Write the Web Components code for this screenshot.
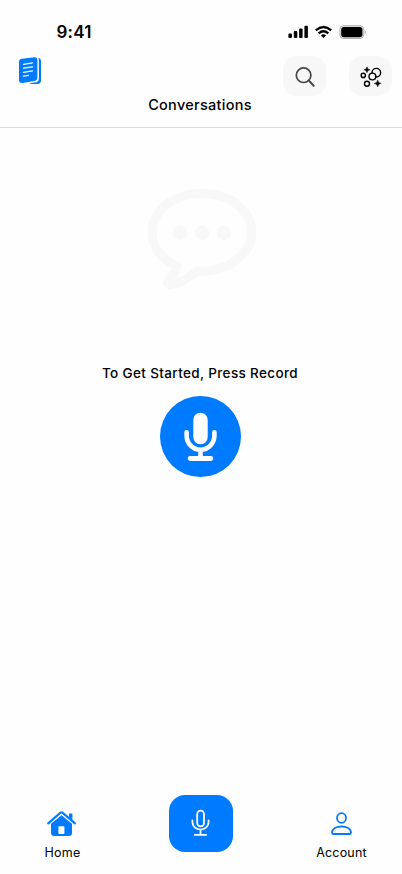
<!DOCTYPE html>
<html lang="en"><head><meta charset="utf-8"><title>Conversations</title>
<style>html,body{margin:0;height:100%;background:#fefefe}body{font-family:Inter,"Liberation Sans",sans-serif;color:#000;overflow:hidden}</style></head>
<body><conversations-screen></conversations-screen>
<script>
const define=(name,css,html)=>customElements.define(name,class extends HTMLElement{
  constructor(){super();this.attachShadow({mode:'open'}).innerHTML=`<style>*{box-sizing:border-box}svg{display:block}${css}</style>${html}`;}
});

define('status-bar',`
:host{display:flex;justify-content:space-between;height:50px;padding:22px 35px 0 56.5px}
.time{font-weight:600;font-size:17px;line-height:21px;letter-spacing:.25px}`,
`<span class="time">9:41</span>
<svg width="79" height="18" viewBox="288 22 79 18">
<rect x="288.4" y="33.4" width="3.5" height="4.6" rx="1"/><rect x="293.8" y="31" width="3.5" height="7" rx="1"/><rect x="299.1" y="28.4" width="3.5" height="9.6" rx="1"/><rect x="304.4" y="25.8" width="3.5" height="12.2" rx="1"/>
<g fill="none" stroke="#000" stroke-width="2.3"><path d="M315.8 30.3Q323.5 23.6 331.2 30.3"/><path d="M318.7 33.4Q323.5 29.2 328.3 33.4"/></g><path d="M320.9 35.4Q323.5 33.3 326.1 35.4L323.5 38Z"/>
<rect x="339.8" y="25.7" width="24" height="12.8" rx="4" fill="#e4e4e4" stroke="#b0b0b0"/><rect x="341.2" y="27" width="21.2" height="10.2" rx="2.7"/><path d="M365.1 30.2Q367.1 32.1 365.1 34Z" fill="#aaa"/></svg>`);

define('tool-button',`:host{display:block;width:43px;height:40px;background:#f7f7f7;border-radius:14px}`,`<slot></slot>`);

define('screen-header',`
:host{display:grid;grid-template-rows:46px 31px;height:78px;border-bottom:1px solid #d9d9d9}
.tools{display:flex;align-items:flex-start;padding:6px 10px 0 19px}
.gap{flex:1}tool-button+tool-button{margin-left:23px}
h1{margin:0;padding-right:2px;text-align:center;font-size:14.5px;font-weight:500;line-height:18px;letter-spacing:.28px}`,
`<div class="tools"><svg width="23" height="28" viewBox="19 56 23 28">
<path d="M38.4 58.1Q41 58.4 41 61.6V80.2Q41 84 37.2 84H32.4Q30.2 84 28.9 83.3L36.4 82.2Q38.9 81.6 38.9 79V61Q38.9 59.3 38.4 58.1Z" fill="#007bff"/>
<path d="M21.9 58.8L34.2 57.2Q37.4 57 37.4 60.1V77.6Q37.4 80.6 34.5 81L22.5 82.9Q19 83.2 19 80V62.2Q19 59.2 21.9 58.8Z" fill="#007bff"/>
<path d="M23.5 64.3L32.5 62.9M23.5 68.2L32.5 66.8M23.5 72.3L32.5 70.9M23.5 76.2L28.5 75.4" stroke="#fefefe" stroke-width="1.3" stroke-linecap="round"/></svg>
<span class="gap"></span>
<tool-button><svg width="43" height="40" viewBox="283 56 43 40" fill="none" stroke="#454545"><circle cx="303.6" cy="75.2" r="7.3" stroke-width="1.7"/><path d="M308.9 80.6L313.7 85.7" stroke-width="2" stroke-linecap="round"/></svg></tool-button>
<tool-button><svg width="43" height="40" viewBox="349 56 43 40" fill="none" stroke="#000" stroke-width="1.4"><circle cx="376.3" cy="72.7" r="4.3"/><circle cx="372.4" cy="76.5" r="3.4" fill="#f7f7f7"/><circle cx="363.3" cy="75.4" r="2.1"/><circle cx="367" cy="83.8" r="2.5"/><g fill="#000" stroke-width=".4"><path d="M367 66.8Q367.2 69.3 370 69.8Q367.2 70.2 367 72.8Q366.7 70.2 364 69.8Q366.7 69.3 367 66.8Z"/><path d="M377.7 79.8Q378 83 381.2 83.4Q378 83.8 377.7 87Q377.3 83.8 374.1 83.4Q377.3 83 377.7 79.8Z"/></g></svg></tool-button></div>
<h1>Conversations</h1>`);

define('empty-state',`
:host{display:flex;flex-direction:column;align-items:center;flex:1;padding-top:56px}
.bubble{margin-left:2px}
p{margin:69px 0 0;padding-right:2px;font-size:13.5px;font-weight:500;line-height:20px;letter-spacing:.36px}
button{display:block;width:81px;height:81px;margin:13px 1px 0 0;padding:0;border:0;border-radius:50%;background:#007bff}`,
`<svg class="bubble" width="120" height="110" viewBox="142 184 120 110"><path d="M177 266.3C162.5 260 152.2 247.5 152.2 233C152.2 210 174 193.4 202 193.4S251.7 210.5 251.7 232.3C251.7 254 228 271.3 202 271.3L197.5 271.2C188 277.5 179.5 284.2 169.5 284.3C167.5 284.3 167.2 282.8 168.3 281.5C172.2 277.3 175.3 272.5 177 266.3Z" fill="none" stroke="#f8f8f8" stroke-width="9.2" stroke-linejoin="round"/><g fill="#f8f8f8"><circle cx="180.1" cy="232.8" r="7.2"/><circle cx="202" cy="232.8" r="7.2"/><circle cx="223.9" cy="232.8" r="7.2"/></g></svg>
<p>To Get Started, Press Record</p>
<button aria-label="Record"><svg width="81" height="81" viewBox="160 396 81 81" fill="none" stroke="#fff" stroke-linecap="round"><rect x="193.3" y="412.7" width="14.4" height="31.6" rx="7.2" fill="#fff" stroke="none"/><path d="M186.6 432.3V435.5A13.9 14.3 0 0 0 214.4 435.5V432.3M200.5 450.2V458" stroke-width="4.6"/><path d="M190.2 458.5H210.8" stroke-width="4.8"/></svg></button>`);

define('tab-item',`:host{display:flex;flex-direction:column;align-items:center;width:90px;padding-top:15px}
.label{margin:6px 0 0 1px;font-size:12.5px;line-height:18px;letter-spacing:.2px}`,`<slot name="icon"></slot><span class="label"><slot></slot></span>`);

define('tab-bar',`
:host{display:flex;align-items:flex-start;justify-content:space-between;height:79px;padding:0 16px 0 17px}
button{width:64px;height:57px;padding:0;border:0;border-radius:16px;background:#007bff;margin-right:1px}`,
`<tab-item><svg slot="icon" width="30" height="28" viewBox="47 810 30 28"><path d="M48.2 823.3L60.4 812.8Q61.5 811.8 62.7 812.8L74.9 823.3" fill="none" stroke="#007bff" stroke-width="2.2" stroke-linecap="round"/><path d="M69 813.6H72.4V820L69 817Z" fill="#007bff"/><path d="M51 823.7L61.5 815.3L72 823.7V832.7Q72 836 68.7 836H54.3Q51 836 51 832.7Z" fill="#007bff"/><rect x="58.4" y="826.2" width="6" height="7.7" rx=".6" fill="#fefefe"/></svg>Home</tab-item>
<button aria-label="New recording"><svg width="64" height="57" viewBox="169 795 64 57" fill="none" stroke="#fff" stroke-width="1.8" stroke-linecap="round"><rect x="197.2" y="810.7" width="6.8" height="15.6" rx="3.4"/><path d="M192.4 820.5V822.1A8.1 7.5 0 0 0 208.6 822.1V820.5M200.5 830V834.7M194.8 834.8H206.2"/></svg></button>
<tab-item><svg slot="icon" width="30" height="28" viewBox="326 810 30 28" fill="none" stroke="#007bff" stroke-width="1.8"><ellipse cx="341.5" cy="818" rx="4.5" ry="4.8"/><path d="M333.3 834Q332 834 332 832.6C332.3 828.6 336.5 826.5 341.5 826.5S350.8 828.6 351 832.6Q351 834 349.7 834Z"/></svg>Account</tab-item>`);

define('conversations-screen',`:host{display:flex;flex-direction:column;width:402px;height:874px;background:#fefefe}`,
`<status-bar></status-bar><screen-header></screen-header><empty-state></empty-state><tab-bar></tab-bar>`);
</script></body></html>
